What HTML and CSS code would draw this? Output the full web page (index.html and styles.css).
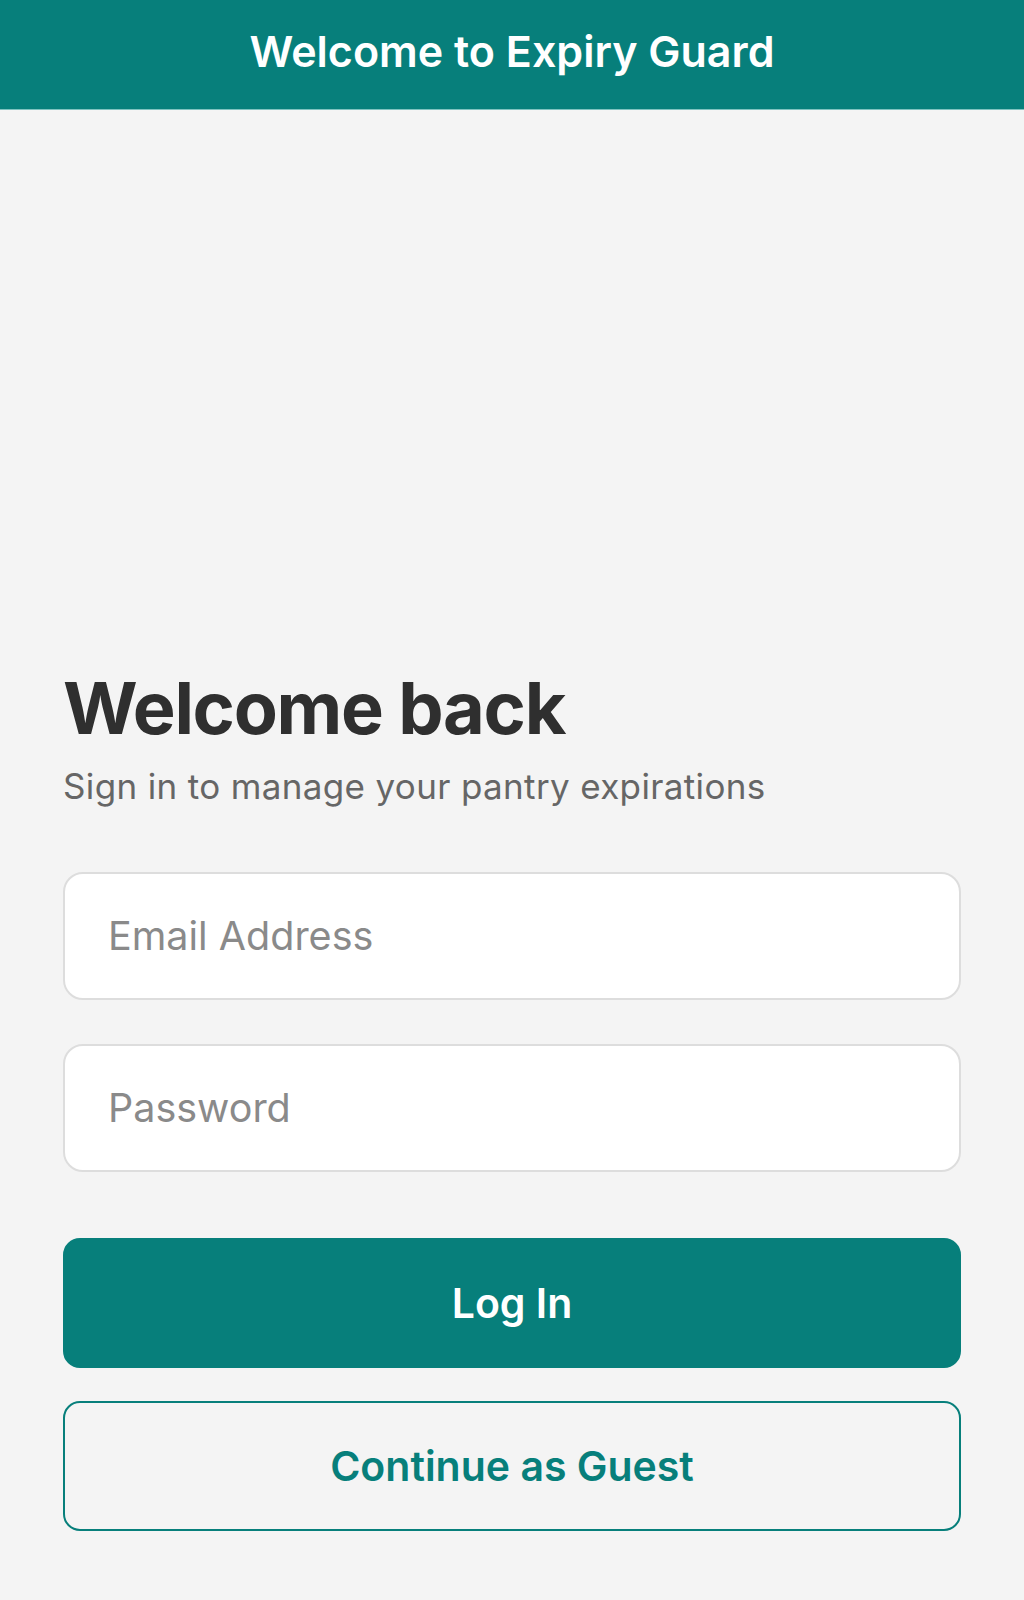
FILE: index.html
```html
<!DOCTYPE html>
<html lang="en">
<head>
<meta charset="utf-8">
<title>Expiry Guard</title>
<link rel="stylesheet" href="styles.css">
</head>
<body>
<div class="app">
  <header class="topbar">
    <h1 class="topbar-title">Welcome to Expiry Guard</h1>
  </header>
  <main class="login">
    <h2 class="login-title">Welcome back</h2>
    <p class="login-subtitle">Sign in to manage your pantry expirations</p>
    <form class="login-form">
      <input class="field" type="email" placeholder="Email Address">
      <input class="field" type="password" placeholder="Password">
      <button class="btn btn-primary" type="button">Log In</button>
      <button class="btn btn-outline" type="button">Continue as Guest</button>
    </form>
  </main>
</div>
</body>
</html>
```
FILE: styles.css
```css
* { box-sizing: border-box; }
html, body { margin: 0; padding: 0; }
body {
  background: #f4f4f4;
  font-family: Inter, "Liberation Sans", Arial, sans-serif;
  color: #2f2f2f;
}
.app {
  height: 1600px;
  display: flex;
  flex-direction: column;
}
.topbar {
  height: 110px;
  background: #077f7b;
  border-bottom: 1px solid #7fc3c0;
  display: flex;
  align-items: center;
  justify-content: center;
  padding-bottom: 6px;
}
.topbar-title {
  margin: 0;
  color: #ffffff;
  font-size: 43px;
  font-weight: 600;
  line-height: 1.2;
}
.login {
  flex: 1;
  display: flex;
  flex-direction: column;
  justify-content: flex-end;
  padding: 0 63px 69px 63px;
}
.login-title {
  margin: 0;
  font-size: 72px;
  font-weight: 700;
  line-height: 86px;
  letter-spacing: -1.3px;
  color: #2f2f2f;
}
.login-subtitle {
  margin: 14px 0 0 0;
  font-size: 35px;
  line-height: 43px;
  letter-spacing: 0.35px;
  color: #666666;
}
.login-form {
  margin-top: 64px;
  display: flex;
  flex-direction: column;
}
.field {
  height: 128px;
  border: 2px solid #dddddd;
  border-radius: 20px;
  background: #ffffff;
  padding: 0 43px;
  font-family: Inter, "Liberation Sans", Arial, sans-serif;
  font-size: 39.5px;
  color: #333333;
  outline: none;
}
.field::placeholder { color: #8a8a8a; }
.field + .field { margin-top: 44px; }
.btn {
  height: 130px;
  border-radius: 17px;
  font-family: Inter, "Liberation Sans", Arial, sans-serif;
  font-size: 41px;
  font-weight: 600;
  cursor: pointer;
}
.btn-primary {
  margin-top: 66px;
  background: #077f7b;
  border: 2px solid #077f7b;
  color: #ffffff;
}
.btn-outline {
  margin-top: 33px;
  background: transparent;
  border: 2px solid #077f7b;
  color: #077f7b;
}
```
